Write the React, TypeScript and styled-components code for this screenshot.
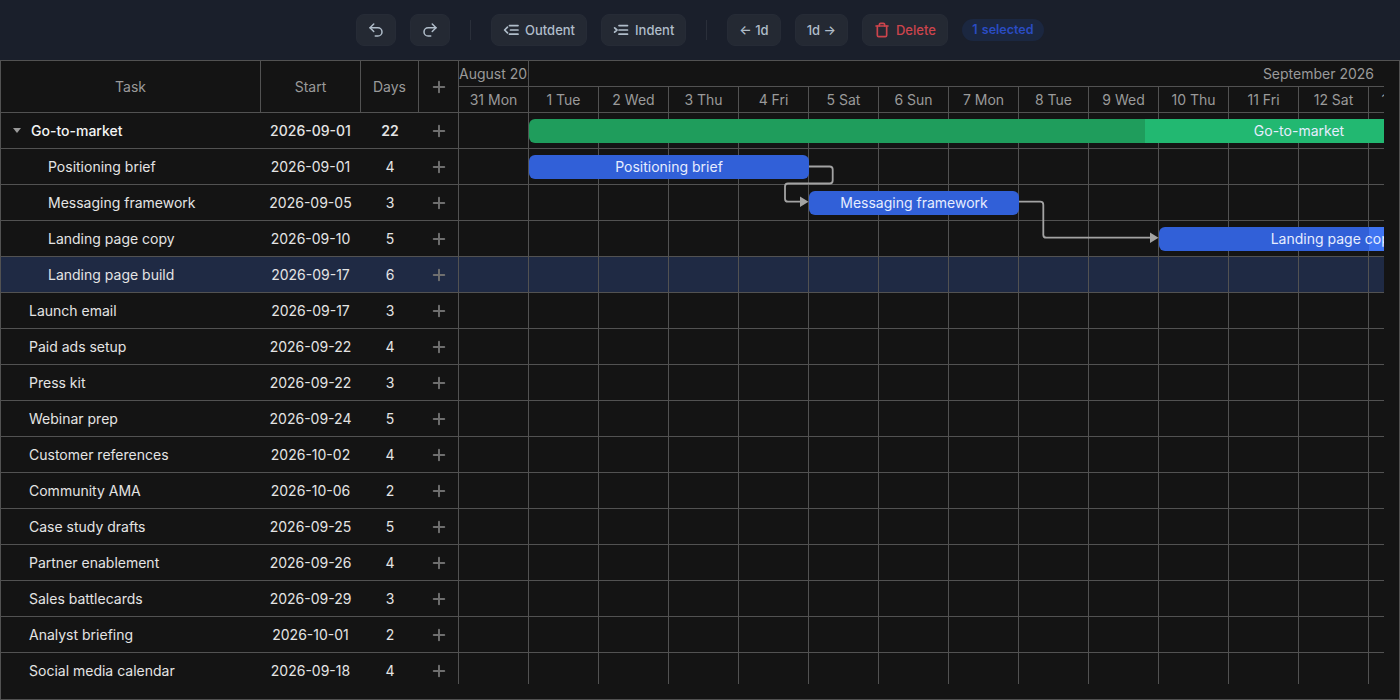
import styled, { createGlobalStyle } from 'styled-components';
import { Undo2, Redo2, Trash, Plus } from 'lucide-react';

const tasks = [
  { name: 'Go-to-market', start: '2026-09-01', days: 22, kind: 'parent' },
  { name: 'Positioning brief', start: '2026-09-01', days: 4, kind: 'child' },
  { name: 'Messaging framework', start: '2026-09-05', days: 3, kind: 'child' },
  { name: 'Landing page copy', start: '2026-09-10', days: 5, kind: 'child' },
  { name: 'Landing page build', start: '2026-09-17', days: 6, kind: 'child', selected: true },
  { name: 'Launch email', start: '2026-09-17', days: 3, kind: 'top' },
  { name: 'Paid ads setup', start: '2026-09-22', days: 4, kind: 'top' },
  { name: 'Press kit', start: '2026-09-22', days: 3, kind: 'top' },
  { name: 'Webinar prep', start: '2026-09-24', days: 5, kind: 'top' },
  { name: 'Customer references', start: '2026-10-02', days: 4, kind: 'top' },
  { name: 'Community AMA', start: '2026-10-06', days: 2, kind: 'top' },
  { name: 'Case study drafts', start: '2026-09-25', days: 5, kind: 'top' },
  { name: 'Partner enablement', start: '2026-09-26', days: 4, kind: 'top' },
  { name: 'Sales battlecards', start: '2026-09-29', days: 3, kind: 'top' },
  { name: 'Analyst briefing', start: '2026-10-01', days: 2, kind: 'top' },
  { name: 'Social media calendar', start: '2026-09-18', days: 4, kind: 'top' },
];

const dayLabels = [
  '31 Mon', '1 Tue', '2 Wed', '3 Thu', '4 Fri', '5 Sat', '6 Sun',
  '7 Mon', '8 Tue', '9 Wed', '10 Thu', '11 Fri', '12 Sat', '13 Sun',
];

function OutdentIcon() {
  return (
    <svg width="16" height="16" viewBox="0 0 16 16" fill="none" stroke="currentColor" strokeWidth="1.7" strokeLinecap="round" strokeLinejoin="round">
      <path d="M4.5 5.2 1.6 8l2.9 2.8" />
      <path d="M6.5 3.6H15M7.5 8H15M6.5 12.2H15" />
    </svg>
  );
}

function IndentIcon() {
  return (
    <svg width="16" height="16" viewBox="0 0 16 16" fill="none" stroke="currentColor" strokeWidth="1.7" strokeLinecap="round" strokeLinejoin="round">
      <path d="M1.6 5.8 4 8l-2.4 2.2" />
      <path d="M6 3.6H14.5M6 8H14.5M6 12.2H14.5" />
    </svg>
  );
}

export default function App() {
  return (
    <>
      <GlobalStyle />
      <Toolbar>
        <IconButton aria-label="Undo"><Undo2 size={18} strokeWidth={2} /></IconButton>
        <IconButton aria-label="Redo"><Redo2 size={18} strokeWidth={2} /></IconButton>
        <Divider />
        <ToolButton><OutdentIcon />Outdent</ToolButton>
        <ToolButton><IndentIcon />Indent</ToolButton>
        <Divider />
        <ToolButton>← 1d</ToolButton>
        <ToolButton>1d →</ToolButton>
        <ToolButton $danger><Trash size={16} strokeWidth={2.5} />Delete</ToolButton>
        <Badge>1 selected</Badge>
      </Toolbar>

      <Frame>
        <TaskTable>
          <TableHead>
            <HeadCell $width={260}>Task</HeadCell>
            <HeadCell $width={100}>Start</HeadCell>
            <HeadCell $width={58}>Days</HeadCell>
            <AddCell><Plus size={18} strokeWidth={2.6} /></AddCell>
          </TableHead>
          <TableBody>
            {tasks.map((task) => (
              <TaskRow key={task.name} $selected={task.selected}>
                <NameCell $kind={task.kind}>
                  {task.kind === 'parent' && <Caret />}
                  {task.name}
                </NameCell>
                <DateCell $bold={task.kind === 'parent'}>{task.start}</DateCell>
                <DaysCell $bold={task.kind === 'parent'}>{task.days}</DaysCell>
                <PlusCell><Plus size={18} strokeWidth={2.6} /></PlusCell>
              </TaskRow>
            ))}
          </TableBody>
        </TaskTable>

        <Chart>
          <Scale>
            <MonthRow>
              <AugustCell>August 2026</AugustCell>
              <SeptemberCell>September 2026</SeptemberCell>
            </MonthRow>
            <DayRow>
              {dayLabels.map((label) => <DayCell key={label}>{label}</DayCell>)}
            </DayRow>
          </Scale>
          <ChartBody>
            {tasks.map((task) => (
              <GridRow key={task.name} $selected={task.selected}>
                {dayLabels.map((label) => <GridCell key={label} />)}
              </GridRow>
            ))}

            <Links width="925" height="571" viewBox="0 0 925 571">
              <path d="M350 53.5H370.7Q373.7 53.5 373.7 56.5V67.5Q373.7 70.5 370.7 70.5H329Q326 70.5 326 73.5V85.7Q326 88.7 329 88.7H343" />
              <path d="M560 88.7H581.3Q584.3 88.7 584.3 91.7V121.7Q584.3 124.7 587.3 124.7H693" />
              <Head points="341,83.4 349.5,88.7 341,94" />
              <Head points="691,119.4 699.5,124.7 691,130" />
            </Links>

            <Bar $left={70} $top={6} $width={1540} $color="#22b871" $fill="#1f9d5c" $progress={40}>
              <span>Go-to-market</span>
            </Bar>
            <Bar $left={70} $top={42} $width={280} $color="#3160d8" $fill="#3160d8" $progress={100}>
              <span>Positioning brief</span>
            </Bar>
            <Bar $left={350} $top={78} $width={210} $color="#3160d8" $fill="#3160d8" $progress={100}>
              <span>Messaging framework</span>
            </Bar>
            <Bar $left={700} $top={114} $width={350} $color="#3f74f2" $fill="#3160d8" $progress={60}>
              <span>Landing page copy</span>
            </Bar>
          </ChartBody>
        </Chart>
      </Frame>
    </>
  );
}

const GlobalStyle = createGlobalStyle`
  html, body {
    margin: 0;
    height: 100%;
    background: #141414;
    font-family: Inter, "Liberation Sans", sans-serif;
    font-size: 14px;
    overflow: hidden;
  }
`;

const Toolbar = styled.div`
  height: 60px;
  box-sizing: border-box;
  display: flex;
  align-items: center;
  justify-content: center;
  gap: 14px;
  background: #1a1f2b;
`;

const ToolButton = styled.button<{ $danger?: boolean }>`
  height: 32px;
  box-sizing: border-box;
  display: flex;
  align-items: center;
  justify-content: center;
  gap: 6px;
  padding: 0 11px;
  border: 1px solid #262b36;
  border-radius: 8px;
  background: #242933;
  color: ${(p) => (p.$danger ? '#cc444c' : '#b0bdca')};
  font: 500 13px Inter, "Liberation Sans", sans-serif;
`;

const IconButton = styled(ToolButton)`
  width: 40px;
  padding: 0;
`;

const Divider = styled.div`
  width: 1px;
  height: 20px;
  margin: 0 6px;
  background: #2a2f3a;
`;

const Badge = styled.div`
  height: 22px;
  display: flex;
  align-items: center;
  padding: 0 10.5px 1px;
  box-sizing: border-box;
  border-radius: 11px;
  background: #1b2740;
  color: #2a4cc4;
  font-size: 12.5px;
  font-weight: 600;
  word-spacing: 1px;
`;

const Frame = styled.div`
  height: 640px;
  box-sizing: border-box;
  display: flex;
  border: 1px solid #525252;
  background: #141414;
`;

const TaskTable = styled.div`
  width: 458px;
  flex: none;
`;

const TableHead = styled.div`
  height: 52px;
  box-sizing: border-box;
  display: flex;
  border-bottom: 1px solid #525252;
  border-right: 1px solid #525252;
`;

const HeadCell = styled.div<{ $width: number }>`
  width: ${(p) => p.$width}px;
  box-sizing: border-box;
  display: flex;
  align-items: center;
  justify-content: center;
  border-right: 1px solid #525252;
  color: #9a9a9a;
`;

const AddCell = styled.div`
  flex: 1;
  display: flex;
  align-items: center;
  justify-content: center;
  color: #6f6f6f;
`;

const TableBody = styled.div`
  height: 571px;
  overflow: hidden;
  border-right: 1px solid #525252;
`;

const TaskRow = styled.div<{ $selected?: boolean }>`
  height: 36px;
  box-sizing: border-box;
  display: flex;
  align-items: center;
  border-bottom: 1px solid #525252;
  background: ${(p) => (p.$selected ? '#1f2a44' : 'transparent')};
  color: #e4e4e4;
`;

const NameCell = styled.div<{ $kind: string }>`
  width: 260px;
  box-sizing: border-box;
  display: flex;
  align-items: center;
  padding-left: ${(p) => (p.$kind === 'parent' ? '12px' : p.$kind === 'child' ? '47px' : '28px')};
  font-weight: ${(p) => (p.$kind === 'parent' ? 500 : 400)};
  color: ${(p) => (p.$kind === 'parent' ? '#f4f4f4' : 'inherit')};
`;

const Caret = styled.span`
  width: 0;
  height: 0;
  margin-right: 10px;
  border-left: 4.5px solid transparent;
  border-right: 4.5px solid transparent;
  border-top: 5px solid #9a9a9a;
`;

const DateCell = styled.div<{ $bold?: boolean }>`
  width: 100px;
  box-sizing: border-box;
  padding-right: 1px;
  text-align: center;
  font-weight: ${(p) => (p.$bold ? 500 : 400)};
`;

const DaysCell = styled.div<{ $bold?: boolean }>`
  width: 58px;
  text-align: center;
  font-weight: ${(p) => (p.$bold ? 600 : 400)};
`;

const PlusCell = styled.div`
  width: 39px;
  display: flex;
  justify-content: center;
  color: #6f6f6f;
`;

const Chart = styled.div`
  width: 925px;
  flex: none;
  overflow: hidden;
`;

const Scale = styled.div`
  height: 52px;
  box-sizing: border-box;
  border-bottom: 1px solid #525252;
`;

const MonthRow = styled.div`
  height: 26px;
  box-sizing: border-box;
  display: flex;
  border-bottom: 1px solid #525252;
  color: #9a9a9a;
  line-height: 25px;
`;

const AugustCell = styled.div`
  width: 70px;
  flex: none;
  box-sizing: border-box;
  overflow: hidden;
  white-space: nowrap;
  border-right: 1px solid #525252;
`;

const SeptemberCell = styled.div`
  flex: 1;
  padding-right: 10px;
  text-align: right;
`;

const DayRow = styled.div`
  height: 25px;
  display: flex;
`;

const DayCell = styled.div`
  width: 70px;
  flex: none;
  box-sizing: border-box;
  border-right: 1px solid #525252;
  color: #9a9a9a;
  text-align: center;
  line-height: 25px;
`;

const ChartBody = styled.div`
  position: relative;
  height: 571px;
  overflow: hidden;
`;

const GridRow = styled.div<{ $selected?: boolean }>`
  height: 36px;
  box-sizing: border-box;
  display: flex;
  border-bottom: 1px solid #525252;
  background: ${(p) => (p.$selected ? '#1f2a44' : 'transparent')};
`;

const GridCell = styled.div`
  width: 70px;
  flex: none;
  box-sizing: border-box;
  border-right: 1px solid #525252;
`;

const Links = styled.svg`
  position: absolute;
  inset: 0;
  fill: none;
  stroke: #a3a3a3;
  stroke-width: 1.8;
`;

const Head = styled.polygon`
  fill: #a3a3a3;
  stroke: none;
`;

const Bar = styled.div<{ $left: number; $top: number; $width: number; $color: string; $fill: string; $progress: number }>`
  position: absolute;
  left: ${(p) => p.$left}px;
  top: ${(p) => p.$top}px;
  width: ${(p) => p.$width}px;
  height: 24px;
  display: flex;
  align-items: center;
  justify-content: center;
  padding-bottom: 2px;
  box-sizing: border-box;
  border-radius: 6px;
  background: linear-gradient(
    to right,
    ${(p) => p.$fill} ${(p) => p.$progress}%,
    ${(p) => p.$color} ${(p) => p.$progress}%
  );
  color: #e6edff;
  white-space: nowrap;
`;
